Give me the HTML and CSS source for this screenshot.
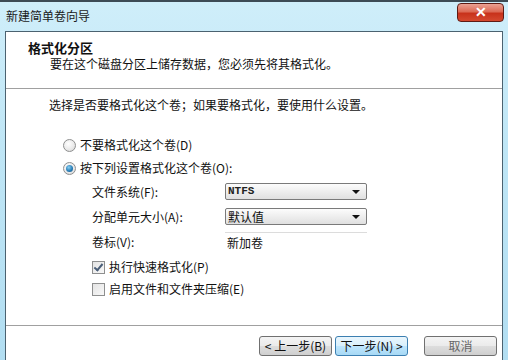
FILE: index.html
```html
<!DOCTYPE html>
<html lang="zh-CN">
<head>
    <meta charset="UTF-8">
    <title>新建简单卷向导</title>
    <link rel="stylesheet" href="styles.css">
</head>
<body>
    <div class="window">
        <div class="titlebar">
            <span class="title">新建简单卷向导</span>
            <button class="close">&#x2715;</button>
        </div>
        <div class="client">
            <div class="header">
                <div class="header-title">格式化分区</div>
                <div class="header-sub">要在这个磁盘分区上储存数据，您必须先将其格式化。</div>
            </div>
            <div class="content">
                <p class="intro">选择是否要格式化这个卷；如果要格式化，要使用什么设置。</p>
                <div class="options">
                    <label class="option"><span class="radio"></span>不要格式化这个卷(D)</label>
                    <label class="option"><span class="radio checked"></span>按下列设置格式化这个卷(O):</label>
                </div>
                <div class="fields">
                    <span class="field-label">文件系统(F):</span>
                    <div class="combo"><span class="latin">NTFS</span><span class="arrow"></span></div>
                    <span class="field-label">分配单元大小(A):</span>
                    <div class="combo">默认值<span class="arrow"></span></div>
                    <span class="field-label">卷标(V):</span>
                    <div class="textbox">新加卷</div>
                </div>
                <div class="checks">
                    <label class="option"><span class="check checked"></span>执行快速格式化(P)</label>
                    <label class="option"><span class="check"></span>启用文件和文件夹压缩(E)</label>
                </div>
            </div>
            <div class="footer">
                <button class="btn">&lt; 上一步(B)</button>
                <button class="btn focused">下一步(N) &gt;</button>
                <button class="btn cancel">取消</button>
            </div>
        </div>
    </div>
</body>
</html>
```

FILE: styles.css
```css
body {
    margin: 0;
    width: 508px;
    height: 360px;
    overflow: hidden;
    font-family: "Noto Sans CJK SC", "Liberation Sans", sans-serif;
    font-size: 12px;
    color: #111;
}

.window {
    height: 360px;
    padding: 0 5px 0 5px;
    background: linear-gradient(180deg, #cfeefa 0%, #bfe6f6 40%, #b2def2 100%);
    border-top: 2px solid #3d4b55;
    box-sizing: border-box;
}

.titlebar {
    height: 29px;
    display: flex;
    align-items: flex-start;
}

.title {
    margin-top: 7px;
    padding-left: 1px;
    font-size: 12px;
    line-height: 14px;
    color: #1a1a1a;
}

.close {
    margin-left: auto;
    margin-top: 1px;
    margin-right: -1px;
    width: 47px;
    height: 19px;
    border: 1px solid #5e1b14;
    border-radius: 4px;
    background: linear-gradient(180deg, #eba193 0%, #dc6a55 45%, #c8321b 55%, #d4492f 100%);
    color: #fff;
    font-size: 14px;
    font-weight: bold;
    line-height: 15px;
    padding: 0;
}

.client {
    height: 340px;
    background: #fff;
    border: 1px solid #4b6270;
    border-bottom: none;
    box-sizing: border-box;
    display: flex;
    flex-direction: column;
}

.header {
    height: 57px;
    padding: 8px 0 0 22px;
    box-sizing: border-box;
    border-bottom: 1px solid #a0a0a0;
}

.header-title {
    font-weight: bold;
    font-size: 13px;
    line-height: 16px;
}

.header-sub {
    padding-left: 22px;
    line-height: 15px;
}

.content {
    flex: 1;
    padding: 8px 0 0 43px;
}

.intro {
    margin: 0;
    line-height: 16px;
}

.options {
    margin-top: 23px;
    display: flex;
    flex-direction: column;
    gap: 5px;
    padding-left: 14px;
}

.option {
    display: flex;
    align-items: center;
    gap: 4px;
    line-height: 18px;
}

.radio {
    width: 11px;
    height: 11px;
    border: 1px solid #8e8f8f;
    border-radius: 50%;
    background: radial-gradient(circle at 40% 35%, #ffffff 0%, #e8e8e8 60%, #cfcfcf 100%);
    position: relative;
}

.radio.checked::after {
    content: "";
    position: absolute;
    left: 2px;
    top: 2px;
    width: 7px;
    height: 7px;
    border-radius: 50%;
    background: radial-gradient(circle at 40% 35%, #8ad0f2 0%, #2a7fb8 55%, #0f4f80 100%);
}

.fields {
    margin-top: 2px;
    padding-left: 43px;
    display: grid;
    grid-template-columns: 133px 142px;
    grid-auto-rows: 25px;
    align-items: center;
}

.combo {
    height: 17px;
    border: 1px solid #7a7a7a;
    border-radius: 2px;
    box-sizing: border-box;
    background: linear-gradient(180deg, #fcfcfc 0%, #eeeeee 50%, #e0e0e0 100%);
    display: flex;
    align-items: center;
    padding-left: 2px;
    line-height: 15px;
}

.latin {
    font-family: "Liberation Mono", monospace;
    font-size: 11px;
    font-weight: bold;
    color: #222;
}

.arrow {
    margin-left: auto;
    margin-right: 6px;
    width: 0;
    height: 0;
    border-left: 4px solid transparent;
    border-right: 4px solid transparent;
    border-top: 4px solid #111;
}

.textbox {
    height: 20px;
    margin-top: 2px;
    border-top: 1px solid #dcdcdc;
    padding-left: 2px;
    line-height: 19px;
}

.checks {
    margin-top: 4px;
    padding-left: 43px;
    display: flex;
    flex-direction: column;
    gap: 4px;
}

.check {
    width: 11px;
    height: 11px;
    border: 1px solid #8e8f8f;
    background: linear-gradient(135deg, #e4e4e4 0%, #f8f8f8 100%);
    position: relative;
}

.check.checked::after {
    content: "";
    position: absolute;
    left: 3px;
    top: 0;
    width: 3px;
    height: 7px;
    border-right: 2px solid #4a5e78;
    border-bottom: 2px solid #4a5e78;
    transform: rotate(40deg);
}

.footer {
    height: 35px;
    border-top: 1px solid #a0a0a0;
    display: flex;
    align-items: flex-start;
    padding: 10px 0 0 253px;
    gap: 3px;
    box-sizing: content-box;
}

.btn {
    width: 73px;
    height: 20px;
    border: 1px solid #707070;
    border-radius: 3px;
    background: linear-gradient(180deg, #f4f4f4 0%, #ebebeb 48%, #dddddd 52%, #cfcfcf 100%);
    font-family: "Noto Sans CJK SC", "Liberation Sans", sans-serif;
    font-size: 12px;
    line-height: 16px;
    color: #111;
    padding: 0;
}

.btn.focused {
    border-color: #3c7fb1;
    background: linear-gradient(180deg, #eaf6fd 0%, #d9f0fc 48%, #bee6fd 52%, #a7d9f5 100%);
}

.btn.cancel {
    margin-left: 13px;
    color: #666;
}
```
